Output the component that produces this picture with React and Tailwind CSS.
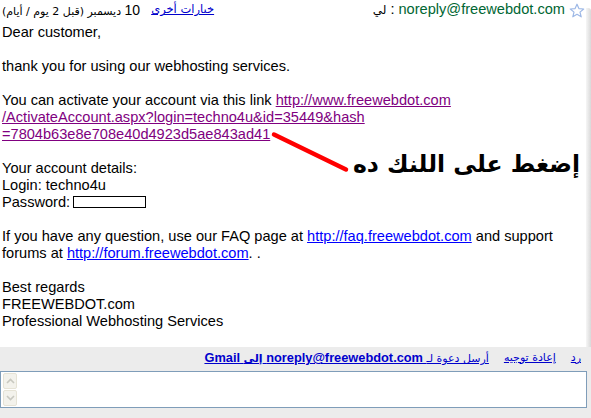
import { useState } from 'react'

function Star() {
  return (
    <svg width="16" height="16" viewBox="0 0 16 16" className="shrink-0 mt-[2px]">
      <path
        d="M8 1.2 L9.9 5.6 L14.7 6 L11 9.1 L12.2 13.8 L8 11.3 L3.8 13.8 L5 9.1 L1.3 6 L6.1 5.6 Z"
        fill="#ffffff"
        stroke="#9db8e6"
        strokeWidth="1.2"
        strokeLinejoin="round"
      />
    </svg>
  )
}

function ScrollButton({ dir }) {
  return (
    <div className="w-[14px] h-[16px] rounded-[2px] border border-[#e6e3d6] bg-[#f3f2ec] flex items-center justify-center">
      <svg width="9" height="6" viewBox="0 0 9 6">
        <path
          d={dir === 'up' ? 'M1 5 L4.5 1.5 L8 5' : 'M1 1 L4.5 4.5 L8 1'}
          fill="none"
          stroke="#c8c8c0"
          strokeWidth="1.6"
        />
      </svg>
    </div>
  )
}

export default function App() {
  const [reply, setReply] = useState('')

  return (
    <div className="relative w-[591px] h-[418px] bg-white overflow-hidden text-black font-['Liberation_Sans','DejaVu_Sans',sans-serif]">
      <div className="flex h-[347px]">
        <div className="flex-1 min-w-0">
          {/* header */}
          <div className="flex items-center justify-between h-[20px] pl-[2px] pr-[1px]">
            <div className="flex items-center gap-[11px] text-[11px] font-['DejaVu_Sans','Liberation_Sans',sans-serif]">
              <span dir="rtl">
                <span className="text-[14px] font-['Liberation_Sans',sans-serif]">10</span> ديسمبر (قبل 2 يوم / أيام)
              </span>
              <a href="#" className="text-[#0000cc] underline text-[11.5px]">خيارات أخرى</a>
            </div>
            <div className="flex items-center gap-[4px]">
              <span className="text-[12px] font-['DejaVu_Sans',sans-serif]">لي</span>
              <span className="text-[14.6px]">:</span>
              <span className="text-[14.6px] text-[#006633]">noreply@freewebdot.com</span>
              <Star />
            </div>
          </div>

          {/* message body */}
          <div className="mt-[4px] pl-[2px] text-[14.6px] leading-[17px]">
            <p className="mb-[17px]">Dear customer,</p>
            <p className="mb-[17px]">thank you for using our webhosting services.</p>
            <p className="mb-[17px]">
              You can activate your account via this link{' '}
              <a href="#" className="text-[#800080] underline">
                http://www.freewebdot.com
                <br />
                /ActivateAccount.aspx?login=techno4u&amp;id=35449&amp;hash
                <br />
                =7804b63e8e708e40d4923d5ae843ad41
              </a>
            </p>
            <p className="mb-[17px]">
              Your account details:
              <br />
              Login: techno4u
              <br />
              Password:
              <span className="inline-block align-[-1px] ml-[3px] w-[73px] h-[12px] border border-black bg-white" />
            </p>
            <p className="mb-[17px]">
              If you have any question, use our FAQ page at{' '}
              <a href="#" className="text-[#0000ff] underline">http://faq.freewebdot.com</a> and support
              <br />
              forums at{' '}
              <a href="#" className="text-[#0000ff] underline">http://forum.freewebdot.com</a>. .
            </p>
            <p>
              Best regards
              <br />
              FREEWEBDOT.com
              <br />
              Professional Webhosting Services
            </p>
          </div>
        </div>
        <div className="w-[5px] mt-[8px] rounded-tr-[3px] bg-gradient-to-r from-[#f6f6f6] to-[#d9d9d9]" />
      </div>

      {/* reply area */}
      <div className="h-[71px] bg-[#ececec] pt-[1px]">
        <div className="flex items-center justify-end h-[20px] pr-[10px] gap-[15px] text-[11px] font-['DejaVu_Sans','Liberation_Sans',sans-serif]">
          <a href="#" dir="rtl" className="text-[#0000cc] underline">
            أرسل دعوة لـ{' '}
            <b className="text-[12.8px] font-['Liberation_Sans','DejaVu_Sans',sans-serif]">
              noreply@freewebdot.com <span className="text-[11px] font-['DejaVu_Sans',sans-serif]">إلى</span> Gmail
            </b>
          </a>
          <a href="#" className="text-[#0000cc] underline">إعادة توجيه</a>
          <a href="#" className="text-[#0000cc] underline">رد</a>
        </div>
        <div className="mt-[3px] mr-[4px] h-[37px] border border-[#7f9db9] bg-white flex">
          <div className="flex flex-col gap-[1px] pl-[2px] pt-[1px]">
            <ScrollButton dir="up" />
            <ScrollButton dir="down" />
          </div>
          <textarea
            dir="rtl"
            value={reply}
            onChange={(e) => setReply(e.target.value)}
            className="flex-1 resize-none outline-none bg-transparent text-[13px]"
          />
        </div>
      </div>

      {/* annotation drawn over the mail */}
      <svg className="absolute left-0 top-0 pointer-events-none" width="591" height="418">
        <line x1="274" y1="134.5" x2="346" y2="169.5" stroke="#ff0000" strokeWidth="4.5" strokeLinecap="round" />
      </svg>
      <div
        dir="rtl"
        className="absolute right-[11px] top-[153px] whitespace-nowrap text-[23.5px] font-bold leading-none font-['DejaVu_Sans',sans-serif]"
      >
        إضغط على اللنك ده
      </div>
    </div>
  )
}
